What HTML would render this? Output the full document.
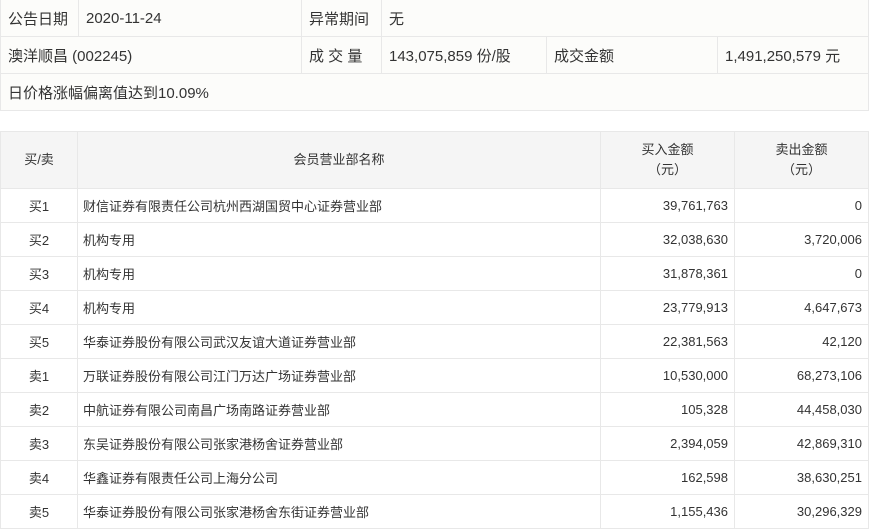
<!DOCTYPE html>
<html><head><meta charset="utf-8"><style>
body{margin:0;background:#fff;font-family:"Liberation Sans","Noto Sans CJK SC",sans-serif;color:#333;}
table{border-collapse:collapse;position:absolute;left:0;table-layout:fixed;}
td,th{border:1px solid #e8e8e8;padding:0;font-weight:normal;white-space:nowrap;}
#t1{top:-1px;width:868px;background:#fcfcfa;font-size:15px;}
#t1 td{height:36px;padding-left:7px;}
#t2{top:131px;width:868px;font-size:13px;}
#t2 th{background:#f5f5f5;height:56px;font-size:13px;line-height:20px;}
#t2 td{height:33px;}
.c{text-align:center}.r{text-align:right;padding-right:6px}.l{padding-left:5px}
</style></head><body>
<table id="t1">
<colgroup><col style="width:78px"><col style="width:223px"><col style="width:80px"><col style="width:165px"><col style="width:171px"><col style="width:151px"></colgroup>
<tr><td>公告日期</td><td>2020-11-24</td><td>异常期间</td><td colspan="3">无</td></tr>
<tr><td colspan="2">澳洋顺昌 (002245)</td><td>成 交 量</td><td>143,075,859 份/股</td><td>成交金额</td><td>1,491,250,579 元</td></tr>
<tr><td colspan="6">日价格涨幅偏离值达到10.09%</td></tr>
</table>
<table id="t2">
<colgroup><col style="width:77px"><col style="width:523px"><col style="width:134px"><col style="width:134px"></colgroup>
<tr><th>买/卖</th><th>会员营业部名称</th><th>买入金额<br>（元）</th><th>卖出金额<br>（元）</th></tr>
<tr><td class="c">买1</td><td class="l">财信证券有限责任公司杭州西湖国贸中心证券营业部</td><td class="r">39,761,763</td><td class="r">0</td></tr>
<tr><td class="c">买2</td><td class="l">机构专用</td><td class="r">32,038,630</td><td class="r">3,720,006</td></tr>
<tr><td class="c">买3</td><td class="l">机构专用</td><td class="r">31,878,361</td><td class="r">0</td></tr>
<tr><td class="c">买4</td><td class="l">机构专用</td><td class="r">23,779,913</td><td class="r">4,647,673</td></tr>
<tr><td class="c">买5</td><td class="l">华泰证券股份有限公司武汉友谊大道证券营业部</td><td class="r">22,381,563</td><td class="r">42,120</td></tr>
<tr><td class="c">卖1</td><td class="l">万联证券股份有限公司江门万达广场证券营业部</td><td class="r">10,530,000</td><td class="r">68,273,106</td></tr>
<tr><td class="c">卖2</td><td class="l">中航证券有限公司南昌广场南路证券营业部</td><td class="r">105,328</td><td class="r">44,458,030</td></tr>
<tr><td class="c">卖3</td><td class="l">东吴证券股份有限公司张家港杨舍证券营业部</td><td class="r">2,394,059</td><td class="r">42,869,310</td></tr>
<tr><td class="c">卖4</td><td class="l">华鑫证券有限责任公司上海分公司</td><td class="r">162,598</td><td class="r">38,630,251</td></tr>
<tr><td class="c">卖5</td><td class="l">华泰证券股份有限公司张家港杨舍东街证券营业部</td><td class="r">1,155,436</td><td class="r">30,296,329</td></tr>
</table>
</body></html>
